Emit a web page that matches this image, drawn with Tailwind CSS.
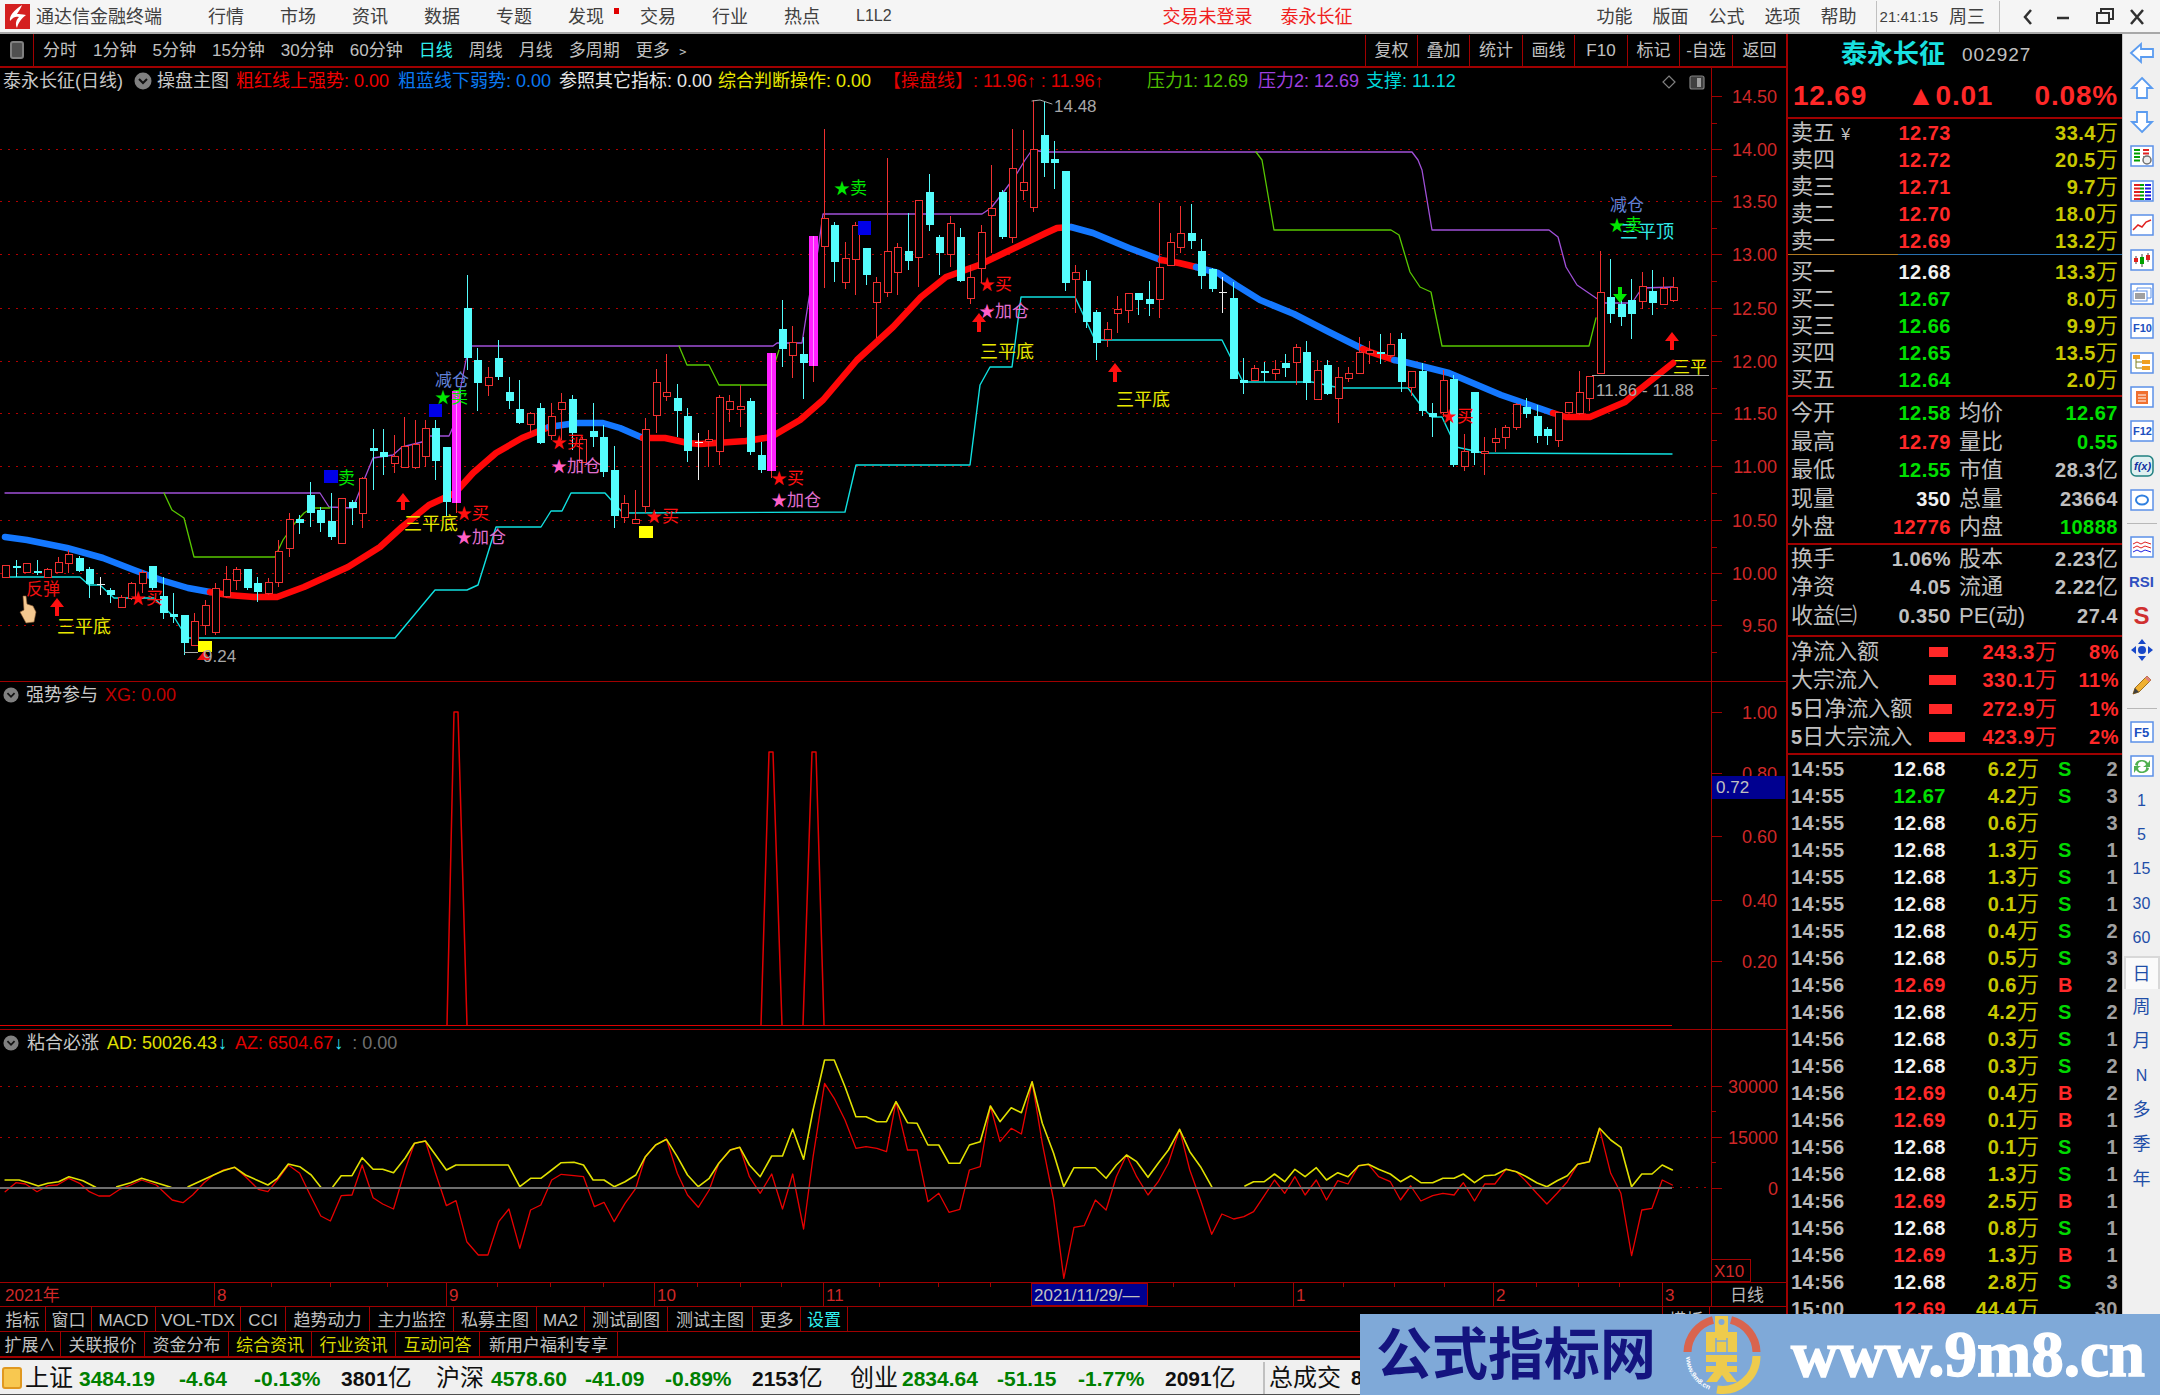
<!DOCTYPE html>
<html lang="zh-CN">
<head>
<meta charset="UTF-8">
<title>通达信金融终端</title>
<script src="https://cdn.jsdelivr.net/npm/@tailwindcss/browser@4"></script>
</head>
<body class="bg-black">
<div class="relative w-[2160px] h-[1395px] overflow-hidden bg-black font-['Liberation_Sans','Noto_Sans_CJK_SC',sans-serif]">

  <!-- title bar -->
  <div class="flex items-center h-[34px] pt-[1px] bg-[#f5f5f5] border-b-2 border-[#a8a8a8] text-[#404040] text-[18px] leading-none">
    <svg class="ml-[5px] w-[25px] h-[25px]" viewBox="0 0 25 25"><rect width="25" height="25" fill="#d42020"/><path d="M17 1 C9 6 4 12 5 17 C8 13 11 12 14 13 C11 16 10 20 12 24 C13 19 17 14 21 11 C17 10 14 10 12 10 C14 7 16 4 17 1Z" fill="#fff"/></svg>
    <span class="ml-[6px] w-[126px]">通达信金融终端</span>
    <div class="flex gap-[36px] ml-[46px]">
      <span>行情</span><span>市场</span><span>资讯</span><span>数据</span><span>专题</span>
      <span class="relative">发现<i class="absolute left-[46px] top-0 w-[5px] h-[6px] bg-[#e00000]"></i></span>
      <span>交易</span><span>行业</span><span>热点</span><span class="text-[16px]">L1L2</span>
    </div>
    <span class="ml-[271px] text-[#f02020] w-[95px]">交易未登录</span>
    <span class="ml-[23px] text-[#f02020] w-[76px]">泰永长征</span>
    <div class="flex gap-[20px] ml-[240px]"><span>功能</span><span>版面</span><span>公式</span><span>选项</span><span>帮助</span></div>
    <div class="flex items-center h-full ml-[19px] pl-[3px] border-x border-[#c0c0c0] w-[124px] text-[15px]">21:41:15<span class="ml-[11px] text-[18px]">周三</span></div>
    <svg class="ml-[19px] w-[130px] h-[24px]" viewBox="0 0 130 24" fill="none" stroke="#303030" stroke-width="2.5"><path d="M12 5 L6 12 L12 19"/><path d="M38 13 H50"/><path d="M78 8 H90 V18 H78Z M82 8 V4 H94 V14 H90" stroke-width="2"/><path d="M112 5 L124 19 M124 5 L112 19"/></svg>
  </div>

  <div class="flex h-[1326px]">
    <!-- left column -->
    <div class="w-[1788px] border-r-2 border-[#a00000]">
      <!-- period toolbar -->
      <div class="flex items-center h-[34px] border-b-2 border-[#a00000] text-[#c0c0c0] text-[17px] leading-none">
        <div class="flex items-center justify-center w-[34px] h-full border-r border-[#a00000]"><div class="w-[14px] h-[18px] rounded-[3px] border-2 border-[#808080] bg-[#505050]"></div></div>
        <div class="flex gap-[16px] ml-[9px] pt-[1px] items-center">
          <span>分时</span><span>1分钟</span><span>5分钟</span><span>15分钟</span><span>30分钟</span><span>60分钟</span><span class="text-[#30f0f0]">日线</span><span>周线</span><span>月线</span><span>多周期</span><span>更多 ﹥</span>
        </div>
        <div class="flex h-full ml-auto pt-[1px]">
          <span class="flex items-center justify-center w-[52px] border-l border-[#a00000]">复权</span>
          <span class="flex items-center justify-center w-[52px] border-l border-[#a00000]">叠加</span>
          <span class="flex items-center justify-center w-[53px] border-l border-[#a00000]">统计</span>
          <span class="flex items-center justify-center w-[52px] border-l border-[#a00000]">画线</span>
          <span class="flex items-center justify-center w-[53px] border-l border-[#a00000]">F10</span>
          <span class="flex items-center justify-center w-[52px] border-l border-[#a00000]">标记</span>
          <span class="flex items-center justify-center w-[53px] border-l border-[#a00000]">-自选</span>
          <span class="flex items-center justify-center w-[54px] border-l border-[#a00000]">返回</span>
        </div>
      </div>

      <!-- price panel -->
      <div class="relative h-[614px]">
        <svg id="priceChart" class="block w-[1786px] h-[614px]" viewBox="0 68 1786 614"></svg>
        <div class="absolute left-[3px] top-0 flex items-center h-[26px] text-[18px] leading-none whitespace-nowrap text-[#c8c8c8]">
          <span class="w-[131px]">泰永长征(日线)</span>
          <span class="w-[23px]"><svg class="block w-[18px] h-[18px]" viewBox="0 0 18 18"><circle cx="9" cy="9" r="8.5" fill="#808080"/><path d="M5 7 L9 11 L13 7" fill="none" stroke="#111" stroke-width="2"/></svg></span>
          <span class="w-[79px]">操盘主图</span>
          <span class="w-[162px] text-[#f00000]">粗红线上强势: 0.00</span>
          <span class="w-[161px] text-[#0a78f0]">粗蓝线下弱势: 0.00</span>
          <span class="w-[159px] text-[#e8e8e8]">参照其它指标: 0.00</span>
          <span class="w-[165px] text-[#e8e800]">综合判断操作: 0.00</span>
          <span class="w-[264px] text-[#e00000]">【操盘线】: 11.96↑ : 11.96↑</span>
          <span class="w-[111px] text-[#50c000]">压力1: 12.69</span>
          <span class="w-[108px] text-[#a040e0]">压力2: 12.69</span>
          <span class="text-[#00d8d8]">支撑: 11.12</span>
        </div>
        <svg class="absolute left-[1660px] top-[5px] w-[46px] h-[18px]" viewBox="0 0 46 18" fill="none" stroke="#808080" stroke-width="1.2"><path d="M9 3 L15 9 L9 15 L3 9Z"/><rect x="30" y="3" width="14" height="13" rx="2" fill="#404040"/><rect x="37" y="5" width="4" height="9" fill="#a0a0a0" stroke="none"/></svg>
      </div>

      <!-- strength panel -->
      <div class="relative h-[348px]">
        <svg id="strengthChart" class="block w-[1786px] h-[348px]" viewBox="0 682 1786 348"></svg>
        <div class="absolute left-[3px] top-0 flex items-center h-[26px] text-[18px] leading-none whitespace-nowrap text-[#c8c8c8]">
          <svg class="w-[16px] h-[16px]" viewBox="0 0 18 18"><circle cx="9" cy="9" r="8.5" fill="#808080"/><path d="M5 7 L9 11 L13 7" fill="none" stroke="#111" stroke-width="2"/></svg>
          <span class="ml-[7px]">强势参与</span>
          <span class="ml-[7px] text-[#c00000]">XG: 0.00</span>
        </div>
      </div>

      <!-- AD/AZ panel -->
      <div class="relative h-[252px]">
        <svg id="adChart" class="block w-[1786px] h-[252px]" viewBox="0 1030 1786 252"></svg>
        <div class="absolute left-[3px] top-0 flex items-center h-[26px] text-[18px] leading-none whitespace-nowrap text-[#c8c8c8]">
          <svg class="w-[16px] h-[16px]" viewBox="0 0 18 18"><circle cx="9" cy="9" r="8.5" fill="#808080"/><path d="M5 7 L9 11 L13 7" fill="none" stroke="#111" stroke-width="2"/></svg>
          <span class="ml-[8px]">粘合必涨</span>
          <span class="ml-[8px] text-[#e0e000]">AD: 50026.43</span><span class="text-[#30e8f8] ml-[1px]">↓</span>
          <span class="ml-[8px] text-[#e00000]">AZ: 6504.67</span><span class="text-[#30e8f8] ml-[1px]">↓</span>
          <span class="ml-[9px] text-[#707070]">: 0.00</span>
        </div>
      </div>

      <!-- date axis -->
      <svg id="dateAxis" class="block w-[1786px] h-[24px]" viewBox="0 1282 1786 24"></svg>

      <!-- indicator tabs -->
      <div class="flex h-[26px] border-y-1 border-[#a00000] text-[#c0c0c0] text-[17px] leading-none [&>span]:pt-[3px]">
        <span class="flex items-center justify-center w-[46px] border-r border-[#a00000]">指标</span>
        <span class="flex items-center justify-center w-[46px] border-r border-[#a00000]">窗口</span>
        <span class="flex items-center justify-center w-[64px] border-r border-[#a00000]">MACD</span>
        <span class="flex items-center justify-center w-[85px] border-r border-[#a00000]">VOL-TDX</span>
        <span class="flex items-center justify-center w-[45px] border-r border-[#a00000]">CCI</span>
        <span class="flex items-center justify-center w-[84px] border-r border-[#a00000]">趋势动力</span>
        <span class="flex items-center justify-center w-[84px] border-r border-[#a00000]">主力监控</span>
        <span class="flex items-center justify-center w-[83px] border-r border-[#a00000]">私募主图</span>
        <span class="flex items-center justify-center w-[48px] border-r border-[#a00000]">MA2</span>
        <span class="flex items-center justify-center w-[83px] border-r border-[#a00000]">测试副图</span>
        <span class="flex items-center justify-center w-[85px] border-r border-[#a00000]">测试主图</span>
        <span class="flex items-center justify-center w-[48px] border-r border-[#a00000]">更多</span>
        <span class="flex items-center justify-center w-[47px] border-r border-[#a00000] text-[#30f0f0]">设置</span>
        <span class="flex items-center justify-center w-[48px] ml-[814px] border-x border-[#a00000]">模板</span>
      </div>
      <div class="flex h-[26px] border-b-2 border-[#a00000] text-[#c0c0c0] text-[17px] leading-none [&>span]:pt-[3px]">
        <span class="flex items-center justify-center w-[61px] border-r border-[#a00000]">扩展∧</span>
        <span class="flex items-center justify-center w-[84px] border-r border-[#a00000]">关联报价</span>
        <span class="flex items-center justify-center w-[84px] border-r border-[#a00000]">资金分布</span>
        <span class="flex items-center justify-center w-[83px] border-r border-[#a00000] text-[#d8d800]">综合资讯</span>
        <span class="flex items-center justify-center w-[84px] border-r border-[#a00000] text-[#d8d800]">行业资讯</span>
        <span class="flex items-center justify-center w-[84px] border-r border-[#a00000] text-[#d8d800]">互动问答</span>
        <span class="flex items-center justify-center w-[138px] border-r border-[#a00000]">新用户福利专享</span>
      </div>
    </div>

    <!-- quote panel -->
    <div class="w-[334px] overflow-hidden">
      <div class="flex items-center h-[34px] pt-[6px] pl-[53px] text-[#18e0e0]">
        <span class="text-[26px] font-bold leading-none">泰永长征</span>
        <span class="ml-[17px] text-[19px] tracking-[1px] text-[#c0c0c0] leading-none">002927</span>
      </div>
      <div class="relative flex items-center h-[51px] pt-[6px] pl-[5px] pr-[4px] border-b-2 border-[#a00000] text-[#ff2828] text-[28px] font-bold leading-none tracking-[0.8px]">
        <span class="w-[114px]">12.69</span>
        <span class="w-[123px]">▲0.01</span>
        <span class="ml-auto">0.08%</span>
      </div>
      <div id="askRows"></div>
      <div class="h-[1px] bg-[linear-gradient(90deg,#b07820_33%,#2870b0_33%)]"></div>
      <div id="bidRows" class="pt-[3px] pb-[2px] border-b-2 border-[#a00000]"></div>
      <div id="statRows" class="pt-[2px] pb-[1px] border-b-2 border-[#a00000]"></div>
      <div id="infoRows" class="pb-[5px] border-b-2 border-[#a00000]"></div>
      <div id="flowRows" class="pt-[1px] pb-[2px] border-b-2 border-[#a00000]"></div>
      <div id="tickRows"></div>
    </div>

    <!-- tool strip -->
    <div id="toolStrip" class="flex flex-col w-[38px] pt-[2px] bg-[#f0f0f0] border-l border-[#c8c8c8] text-[#1f4ea8] leading-none"></div>
  </div>

  <!-- index strip -->
  <div class="flex items-center h-[35px] pt-[2px] bg-[#f0f0f0] border-b border-[#505050] text-[21px] leading-none whitespace-nowrap text-[#101010]">
    <div class="w-[25px] pl-[2px]"><div class="w-[20px] h-[22px] rounded-[3px] border-2 border-[#e09820] bg-[#f8c850]"></div></div>
    <span class="w-[54px] text-[24px]">上证</span>
    <span class="w-[100px] font-bold text-[#008000]">3484.19</span>
    <span class="w-[75px] font-bold text-[#008000]">-4.64</span>
    <span class="w-[87px] font-bold text-[#008000]">-0.13%</span>
    <span class="w-[95px] font-bold">3801<span class="text-[24px] font-normal">亿</span></span>
    <span class="w-[55px] text-[24px]">沪深</span>
    <span class="w-[94px] font-bold text-[#008000]">4578.60</span>
    <span class="w-[80px] font-bold text-[#008000]">-41.09</span>
    <span class="w-[87px] font-bold text-[#008000]">-0.89%</span>
    <span class="w-[98px] font-bold">2153<span class="text-[24px] font-normal">亿</span></span>
    <span class="w-[52px] text-[24px]">创业</span>
    <span class="w-[95px] font-bold text-[#008000]">2834.64</span>
    <span class="w-[81px] font-bold text-[#008000]">-51.15</span>
    <span class="w-[87px] font-bold text-[#008000]">-1.77%</span>
    <span class="w-[98px] font-bold">2091<span class="text-[24px] font-normal">亿</span></span>
    <span class="flex items-center h-full pl-[4px] border-l-2 border-[#c0c0c0] text-[24px]">总成交<b class="ml-[10px] text-[20px]">8</b></span>
  </div>

  <!-- site watermark -->
  <div class="absolute left-[1360px] top-[1314px] flex items-center w-[800px] h-[81px] bg-[#7fa9d8] leading-none whitespace-nowrap">
    <span class="ml-[16px] w-[280px] text-[56px] font-bold text-[#14147f]">公式指标网</span>
    <svg class="ml-[27px] w-[78px] h-[81px]" viewBox="1682 1314 78 81">
      <g fill="none" stroke-width="8">
        <path d="M1712 1320 A34 34 0 0 0 1686.500 1352" stroke="#d9644e"/>
        <path d="M1730 1320 A34 34 0 0 1 1755.500 1352" stroke="#d9644e"/>
        <path d="M1755.500 1356 A34 34 0 0 1 1716 1389.500" stroke="#eecb4c"/>
      </g>
      <path d="M1714 1316 H1727 V1332 H1736 V1352 H1705 V1332 H1714Z" fill="#eecb4c"/>
      <path d="M1705 1355 H1736 V1362 H1726 V1366 H1736 V1372 H1728 L1736 1382 H1726 L1721 1375 L1716 1382 H1705 L1713 1372 H1705 V1366 H1715 V1362 H1705Z" fill="#eecb4c"/>
      <circle cx="1720.500" cy="1322" r="3" fill="#7fa9d8"/>
      <path d="M1715 1341 H1726 M1715 1338 V1352 M1726 1338 V1352" stroke="#7fa9d8" stroke-width="1.500" fill="none"/>
      <path id="logoArc" d="M1685 1357 A36 36 0 0 0 1712 1391" fill="none"/>
      <text font-size="7" font-weight="700" fill="#fff"><textPath href="#logoArc">www.9m8.cn</textPath></text>
    </svg>
    <span class="ml-[30px] text-[65px] font-bold text-white font-['Liberation_Serif',serif] [-webkit-text-stroke:1.5px_#fff]">www.9m8.cn</span>
  </div>
</div>

<script>
// --- HELPERS ---
const AXIS = '#a00000', DOT = '#b00000', LABEL = '#d02828';
const RED = '#f03030', CYAN = '#54fcfc', PINK = '#ff20ff', GRAY = '#a8a8a8';
const poly = (p, c, w = 1) => `<polyline points="${p.map(a => a.join(',')).join(' ')}" fill="none" stroke="${c}" stroke-width="${w}" stroke-linejoin="round" stroke-linecap="round"/>`;
const line = (x1, y1, x2, y2, c, extra = '') => `<line x1="${x1}" y1="${y1}" x2="${x2}" y2="${y2}" stroke="${c}" shape-rendering="crispEdges" ${extra}/>`;
const txt = (x, y, s, c, size = 18, anchor = 'start') => `<text x="${x}" y="${y}" fill="${c}" font-size="${size}" text-anchor="${anchor}" dominant-baseline="central">${s}</text>`;
const dotted = (y, x2 = 1711) => line(0, y, x2, y, DOT, 'stroke-dasharray="2 6"');
const upArrow = (x, y1, y2, c = '#ff1010') => `<path d="M${x} ${y1} L${x + 7} ${y1 + 9} H${x + 2} V${y2} H${x - 2} V${y1 + 9} H${x - 7}Z" fill="${c}"/>`;
const square = (x1, y1, x2, y2, c) => `<rect x="${x1}" y="${y1}" width="${x2 - x1}" height="${y2 - y1}" fill="${c}"/>`;
const starTag = (x, y, s, c, sc = c) => txt(x - 8, y, '★', sc, 16) + txt(x + 8, y, s, c, 17);

// --- PRICE PANEL DATA ---
// [kind, bodyTop, bodyBottom, wickTop, wickBottom], index = bar number; kinds r/c/w/p
const bars = [
['r',565,577,565,577],['c',566,568,560,577],['r',563,572,563,572],['c',571,573,560,575],['r',569,577,568,577],['r',562,572,557,573],['r',554,563,550,573],['c',558,571,556,572],['c',569,584,567,598],['w',584,584,577,595],
['c',590,595,588,603],['r',597,607,595,607],['r',583,598,582,600],['r',572,583,570,593],['c',566,588,566,590],['c',596,613,577,619],['c',614,617,593,623],['c',615,643,615,655],['r',621,645,613,645],['r',605,625,600,635],
['r',588,632,583,635],['r',579,596,566,598],['r',569,580,567,590],['c',569,588,569,590],['c',583,592,577,602],['r',582,593,578,595],['r',551,582,540,587],['r',519,548,513,557],['c',519,523,515,534],['c',495,513,482,527],
['c',510,523,507,532],['c',521,537,493,540],['r',498,543,498,543],['c',502,508,500,525],['r',478,513,477,528],['c',448,451,429,490],['c',452,457,429,475],['r',456,463,435,473],['r',446,467,417,468],['r',444,467,420,469],
['r',428,456,420,467],['c',428,461,420,480],['c',447,502,447,517],['p',391,503,391,513],['c',308,358,275,370],['c',360,383,348,411],['r',377,385,367,396],['c',358,377,340,380],['c',392,401,377,409],['c',409,423,380,424],
['r',413,424,412,433],['c',408,443,403,444],['r',416,435,403,440],['r',402,409,393,440],['c',399,433,395,450],['r',439,462,437,463],['c',431,437,403,447],['c',437,472,425,477],['c',470,516,446,528],['r',503,517,495,523],
['r',519,523,490,523],['r',429,506,418,513],['r',382,415,369,433],['r',392,396,354,401],['c',398,411,384,437],['c',416,451,408,462],['w',442,442,433,480],['r',439,441,430,467],['r',397,451,395,465],['r',401,409,395,422],
['r',406,409,385,427],['c',401,452,398,455],['c',455,470,442,473],['p',353,471,353,478],['c',329,349,300,367],['r',342,355,326,378],['c',354,363,337,399],['p',236,366,236,382],['r',218,246,129,288],['c',225,262,222,282],
['r',258,282,242,289],['r',225,259,222,295],['c',248,275,248,285],['r',282,302,277,338],['r',251,292,158,297],['r',247,272,243,295],['c',251,261,213,270],['r',200,257,200,287],['c',192,225,174,231],['c',237,253,235,275],
['r',223,254,216,267],['c',237,281,228,282],['r',277,298,265,304],['r',232,268,225,283],['r',208,215,165,253],['c',192,237,190,239],['r',168,237,129,243],['r',182,190,130,200],['r',149,207,100,212],['c',135,163,102,177],
['c',159,163,141,189],['c',171,283,171,291],['r',272,279,265,313],['c',281,322,270,328],['c',312,343,310,360],['r',329,339,322,347],['r',309,313,296,333],['r',293,310,293,323],['c',293,300,293,315],['c',299,304,281,316],
['r',267,299,203,318],['r',242,265,233,265],['r',233,247,206,253],['c',233,241,204,249],['c',251,276,239,289],['c',269,289,268,292],['w',292,292,277,313],['c',298,379,282,379],['c',380,383,358,394],['r',368,380,365,380],
['c',371,373,362,382],['r',369,373,360,380],['c',363,368,354,377],['r',347,362,344,385],['c',352,383,341,400],['r',370,399,360,400],['c',365,394,360,395],['r',377,398,367,423],['r',373,378,367,382],['r',352,373,337,373],
['r',350,353,341,364],['c',352,354,334,364],['r',344,355,333,358],['c',339,382,333,392],['r',371,387,371,396],['c',371,411,363,416],['c',413,417,403,437],['r',380,412,370,417],['c',379,465,375,467],['r',451,466,434,471],
['c',392,453,392,465],['r',451,453,437,475],['r',438,442,428,452],['r',427,437,425,449],['r',404,427,403,430],['c',407,414,398,418],['c',416,436,405,443],['c',429,436,427,445],['r',412,440,412,447],['r',402,412,402,412],
['r',392,413,371,415],['r',376,398,376,411],['r',292,373,251,373],['c',297,314,259,323],['c',304,317,288,326],['c',300,314,279,339],['r',286,301,272,309],['c',291,303,270,315],['r',288,304,277,304],['r',287,300,277,302]];

const purple = [[5,493],[320,493],[329,507],[353,508],[364,480],[373,458],[393,455],[402,447],[422,442],[429,436],[449,436],[453,427],[466,360],[471,346],[773,346],[777,343],[802,343],[809,298],[818,250],[823,214],[982,214],[991,208],[1005,190],[1016,175],[1025,160],[1032,150],[1046,152],[1412,152],[1418,160],[1422,170],[1432,230],[1549,230],[1558,237],[1566,267],[1577,285],[1596,298],[1604,303],[1632,303],[1642,288],[1673,287]];
const greenLines = [
[[164,493],[172,510],[184,518],[194,557],[275,557],[283,540],[295,523],[304,513],[312,508],[330,508]],
[[679,346],[687,365],[709,365],[719,385],[768,385],[779,350]],
[[1256,152],[1262,160],[1274,230],[1391,230],[1399,235],[1410,272],[1420,287],[1431,292],[1442,346],[1589,346],[1596,318]]];
const support = [[5,577],[80,577],[89,585],[100,585],[114,598],[154,598],[174,617],[187,638],[395,638],[435,590],[467,590],[478,585],[496,527],[541,527],[551,511],[562,511],[571,493],[605,493],[623,513],[845,512],[856,465],[970,465],[980,385],[990,367],[1012,367],[1021,297],[1075,297],[1095,340],[1222,340],[1243,382],[1312,382],[1340,388],[1408,388],[1422,407],[1432,417],[1442,417],[1456,447],[1484,453],[1672,454]];
const trend = [
['#1478ff',[[5,537],[27,540],[67,548],[103,558],[134,570],[161,580],[188,588],[210,592]]],
['#ff0808',[[210,592],[228,595],[254,597],[277,597],[304,587],[348,567],[380,547],[402,527],[429,505],[455,493],[473,473],[496,453],[522,438],[549,427]]],
['#1478ff',[[549,427],[576,423],[603,423],[620,428],[643,438]]],
['#ff0808',[[643,438],[665,438],[688,443],[700,444],[746,441],[771,437],[800,420],[823,400],[857,360],[893,327],[921,297],[946,277],[979,265],[1004,253],[1046,233],[1057,228],[1071,227]]],
['#1478ff',[[1071,227],[1093,233],[1129,248],[1161,260]]],
['#ff0808',[[1161,260],[1179,263],[1196,267]]],
['#1478ff',[[1196,267],[1218,273],[1236,285],[1260,300],[1294,314],[1329,332],[1363,349]]],
['#ff0808',[[1363,349],[1370,352],[1394,360]]],
['#1478ff',[[1394,360],[1405,362],[1449,373],[1501,395],[1553,413]]],
['#ff0808',[[1553,413],[1566,417],[1590,417],[1625,402],[1639,390],[1673,363]]]];

// --- PRICE PANEL ---
function drawPrice() {
    const prices = [['14.50',96],['14.00',149],['13.50',201],['13.00',254],['12.50',308],['12.00',361],['11.50',413],['11.00',466],['10.50',520],['10.00',573],['9.50',625]];
    let s = '';
    prices.forEach(([p, y]) => { if (y > 100) s += dotted(y + .5); });
    prices.forEach(([p, y], i) => {
        s += line(1711, y + .5, 1722, y + .5, AXIS) + line(1711, y + 27, 1717, y + 27, AXIS) + txt(1777, y + 1, p, LABEL, 18, 'end');
    });
    s += line(1711.5, 68, 1711.5, 682, AXIS) + line(0, 681.5, 1786, 681.5, AXIS);
    s += poly(purple, '#a050d8', 1.3) + greenLines.map(g => poly(g, '#58c800', 1.3)).join('') + poly(support, '#10e0e0', 1.4);
    trend.forEach(([c, p]) => { s += poly(p, c, 6.5); });
    bars.forEach((b, i) => {
        const x = Math.round(5.4 + i * 10.49) + .5;
        const [k, top, bot, hi, lo] = b;
        if (k === 'p') {
            s += line(x, hi, x, lo, RED) + `<rect x="${x - 4.5}" y="${top}" width="9" height="${bot - top}" fill="${PINK}"/>` + line(x, top, x, bot, '#ff90ff');
        } else if (k === 'w') {
            s += line(x, hi, x, lo, '#f0f0f0') + line(x - 4, top + .5, x + 4, top + .5, '#f0f0f0');
        } else if (k === 'c') {
            s += line(x, hi, x, lo, CYAN) + `<rect x="${x - 4}" y="${top}" width="8" height="${Math.max(bot - top, 2)}" fill="${CYAN}" shape-rendering="crispEdges"/>`;
        } else {
            s += line(x, hi, x, lo, RED) + `<rect x="${x - 3.5}" y="${top + .5}" width="7" height="${Math.max(bot - top, 2)}" fill="#000" stroke="${RED}" shape-rendering="crispEdges"/>`;
        }
    });
    const Y = '#e8e800', G = '#00e800', R = '#ff1010', P = '#e070d0', PS = '#ff60c8', B = '#6080d8';
    s += txt(26, 589, '反弹', '#f01010', 17) + upArrow(57, 598, 616) + txt(57, 627, '三平底', Y, 18);
    s += `<path d="M23 596 L26 596 L27 604 L33 606 L36 612 L34 622 L26 623 L20 612 L24 610Z" fill="#f4c890" stroke="#8a5a30" stroke-width=".6"/>`;
    s += starTag(138, 598, '买', R);
    s += square(198, 641, 212, 652, '#ffff00') + `<path d="M204 651 L211 660 H197Z" fill="#f01010"/>` + line(184, 652, 198, 652, GRAY) + txt(203, 656, '9.24', GRAY, 17);
    s += txt(338, 478, '卖', G, 17) + square(324, 470, 338, 483, '#0000e8');
    s += upArrow(403, 493, 510) + txt(404, 524, '三平底', Y, 18);
    s += txt(435, 380, '减仓', B, 17) + square(429, 404, 442, 417, '#0000e8') + starTag(443, 397, '卖', G);
    s += starTag(464, 513, '买', R) + starTag(464, 537, '加仓', P, PS);
    s += starTag(559, 442, '买', R) + starTag(559, 466, '加仓', P, PS);
    s += starTag(654, 516, '买', R) + square(639, 526, 653, 538, '#ffff00');
    s += starTag(779, 478, '买', R) + starTag(779, 500, '加仓', P, PS);
    s += starTag(842, 188, '卖', G) + square(858, 221, 871, 235, '#0000e8');
    s += starTag(987, 284, '买', R) + starTag(987, 311, '加仓', P, PS) + upArrow(979, 313, 332) + txt(980, 352, '三平底', Y, 18);
    s += upArrow(1115, 363, 382) + txt(1116, 400, '三平底', Y, 18);
    s += poly([[1032,101],[1040,100],[1052,104]], GRAY) + txt(1054, 106, '14.48', GRAY, 17);
    s += starTag(1449, 416, '买', R);
    s += txt(1610, 205, '减仓', B, 17) + txt(1620, 232, '三平顶', '#30e8e8', 18) + starTag(1617, 225, '卖', G);
    s += `<path d="M1620 303 L1613 294 H1618 V287 H1622 V294 H1627Z" fill="#00e800"/>` + upArrow(1672, 332, 350);
    s += txt(1673, 367, '三平', Y, 17) + line(1592, 375.5, 1709, 375.5, GRAY) + txt(1596, 390, '11.86 - 11.88', GRAY, 17);
    document.getElementById('priceChart').innerHTML = s;
}

// --- STRENGTH PANEL ---
function drawStrength() {
    let s = line(1711.5, 682, 1711.5, 1030, AXIS) + line(0, 1029.5, 1786, 1029.5, AXIS) + line(0, 1025.5, 1672, 1025.5, '#e00000');
    [['1.00',712],['0.80',773],['0.60',836],['0.40',900],['0.20',961]].forEach(([t, y]) => {
        s += line(1711, y + .5, 1722, y + .5, AXIS) + txt(1777, y + 1, t, LABEL, 18, 'end');
    });
    s += `<rect x="1712" y="776" width="73" height="23" fill="#000090"/>` + txt(1716, 787, '0.72', '#c0c0c0', 17);
    [[447,456,467,712],[761,771,782,752],[803,814,824,752]].forEach(([a, m, b, y]) => {
        s += poly([[a,1025],[m - 2,y],[m + 2,y],[b,1025]], '#e00000', 1.5);
    });
    document.getElementById('strengthChart').innerHTML = s;
}

// --- AD/AZ PANEL ---
const z9 = a => a.map(([x, y]) => [+(x / 1.568).toFixed(1), +(1030 + y / 3).toFixed(1)]);
const z10 = a => a.map(([x, y]) => [+(1000 + x / 1.96).toFixed(1), +(1030 + y / 3).toFixed(1)]);
const adSegs = [
z9([[8,450],[30,450],[45,458],[60,468],[75,460],[92,455],[108,440],[130,452],[150,472]]),
z9([[183,470],[205,458],[222,445],[245,458],[268,472]]),
z9([[295,470],[312,455],[335,435],[350,422],[368,412],[385,435],[405,452],[420,465],[435,445],[452,402],[470,410],[488,435],[503,472]]),
z9([[522,470],[535,437],[552,437],[568,383],[585,418],[600,418],[617,428],[635,385],[650,340],[667,333],[683,375],[700,420],[715,405],[797,405],[815,470],[832,445],[848,445],[865,420],[880,398],[900,397],[915,405],[930,450],[947,450],[963,470],[980,455],[997,435],[1012,380],[1028,345],[1045,328],[1062,380],[1078,435],[1095,470],[1112,445],[1127,400],[1145,360],[1160,352],[1175,405],[1192,440],[1210,378],[1227,378],[1243,297],[1260,388],[1275,240],[1293,90],[1308,90],[1325,170],[1342,260],[1358,260],[1375,275],[1390,275],[1405,215],[1423,278],[1438,280],[1455,345],[1472,345],[1488,400],[1505,400],[1520,345],[1537,335],[1553,228],[1568,275]]).concat(
z10([[22,233],[42,248],[63,155],[83,280],[105,370],[125,470],[145,413],[187,413],[208,445],[228,405],[248,375],[268,395],[290,442],[310,400],[330,360],[352,298],[372,365],[393,410],[415,470]])),
z10([[480,468],[497,455],[518,455],[538,432],[558,455],[578,418],[598,440],[620,413],[640,450],[662,428],[682,440],[703,407],[722,403],[742,418],[765,432],[785,455],[805,437],[825,458],[848,458],[868,445],[890,445],[908,432],[930,458],[950,437],[970,435],[992,418],[1012,425],[1032,440],[1052,458],[1072,470],[1092,452],[1112,437],[1132,403],[1155,395],[1175,295],[1197,330],[1217,352],[1238,470],[1258,432],[1278,432],[1298,405],[1318,420]])];
const azLine = z9([[8,485],[25,458],[40,462],[58,485],[75,467],[90,465],[108,445],[125,460],[140,485],[155,498],[172,498],[188,478],[205,465],[222,450],[245,465],[270,510],[287,518],[302,495],[320,458],[335,435],[350,420],[368,412],[385,440],[405,478],[420,485],[435,450],[452,405],[470,430],[485,490],[503,558],[518,573],[535,497],[552,495],[568,405],[585,503],[600,522],[617,537],[635,420],[650,340],[667,333],[683,430],[700,527],[715,512],[732,635],[750,675],[765,675],[782,575],[798,537],[815,655],[832,540],[848,525],[865,450],[880,433],[900,437],[915,440],[932,530],[947,517],[963,575],[980,520],[997,475],[1012,380],[1028,345],[1045,328],[1062,430],[1078,495],[1095,532],[1112,480],[1127,400],[1145,360],[1160,352],[1175,440],[1192,490],[1210,432],[1227,537],[1243,432],[1260,597],[1275,380],[1293,160],[1308,205],[1325,270],[1342,355],[1358,350],[1375,355],[1390,365],[1405,215],[1423,360],[1438,360],[1455,515],[1472,490],[1488,547],[1505,538],[1520,420],[1537,410],[1553,228],[1568,335]]).concat(
z10([[22,295],[42,312],[63,155],[83,340],[105,510],[125,745],[145,592],[165,587],[187,510],[208,540],[228,440],[248,375],[268,440],[290,495],[310,455],[330,400],[352,298],[372,420],[393,510],[415,613],[435,552],[458,567],[478,560],[497,545],[518,497],[538,450],[558,490],[578,440],[598,495],[620,450],[640,510],[662,452],[682,462],[703,407],[722,403],[742,440],[765,455],[785,510],[805,468],[825,513],[848,497],[868,490],[890,495],[908,458],[930,513],[950,462],[970,462],[992,418],[1012,425],[1032,455],[1052,490],[1072,522],[1092,490],[1112,455],[1132,403],[1155,395],[1175,295],[1197,430],[1217,490],[1238,677],[1258,540],[1278,535],[1298,450],[1318,465]]));

function drawAd() {
    let s = line(1711.5, 1030, 1711.5, 1282, AXIS);
    [1086.5, 1137.5].forEach(y => { s += dotted(y); });
    s += line(1672, 1187.5, 1711, 1187.5, DOT, 'stroke-dasharray="2 6"');
    [['30000',1086],['15000',1137],['0',1188]].forEach(([t, y]) => { s += line(1711, y + .5, 1722, y + .5, AXIS) + txt(1778, y + 1, t, LABEL, 18, 'end'); });
    s += line(1711, 1111.5, 1716, 1111.5, AXIS) + line(1711, 1162.5, 1716, 1162.5, AXIS);
    s += poly(azLine, '#e80000', 1.3) + adSegs.map(a => poly(a, '#e0e000', 1.6)).join('') + line(0, 1187.5, 1672, 1187.5, '#6e6e6e', 'stroke-width="2"');
    s += `<rect x="1711.5" y="1259.5" width="39" height="22" fill="none" stroke="${AXIS}"/>` + txt(1714, 1271, 'X10', LABEL, 17);
    document.getElementById('adChart').innerHTML = s;
}

// --- DATE AXIS ---
function drawDates() {
    let s = line(0, 1282.5, 1786, 1282.5, AXIS) + line(1711.5, 1282, 1711.5, 1306, AXIS);
    [271,330,387,497,550,603,697,740,781,879,938,990,1173,1234,1343,1394,1444,1536,1578,1619].forEach(x => { s += line(x + .5, 1282, x + .5, 1287, AXIS); });
    [[214,'8'],[446,'9'],[654,'10'],[823,'11'],[1293,'1'],[1493,'2'],[1662,'3']].forEach(([x, t]) => { s += line(x + .5, 1282, x + .5, 1306, AXIS) + txt(x + 3, 1295, t, LABEL, 17); });
    s += txt(5, 1295, '2021年', LABEL, 17);
    s += `<rect x="1031.5" y="1283.5" width="116" height="22" fill="#000090" stroke="${AXIS}"/>` + txt(1034, 1295, '2021/11/29/—', '#c0c0c0', 17);
    s += txt(1730, 1295, '日线', '#b8b8b8', 17);
    document.getElementById('dateAxis').innerHTML = s;
}

// --- QUOTE PANEL ---
const PRICE = { r: 'text-[#ff2828]', g: 'text-[#00e000]', w: 'text-[#f0f0f0]', y: 'text-[#c8c800]', s: 'text-[#c0c0c0]' };

function bookRow(label, price, tone, vol) {
    return `<div class="flex items-center h-[27px] pl-[3px] pr-[4px] leading-none">
        <span class="w-[107px] text-[22px] text-[#c0c0c0] whitespace-nowrap">${label}</span>
        <span class="w-[53px] text-right text-[20px] font-bold tracking-[0.5px] ${PRICE[tone]}">${price}</span>
        <span class="flex-1 text-right text-[20px] font-bold tracking-[0.5px] text-[#c8c800]">${vol}<span class="text-[22px] font-normal tracking-normal">万</span></span>
    </div>`;
}
document.getElementById('askRows').innerHTML = [
    ['卖五 <span class="text-[16px]">¥</span>','12.73','r','33.4'],['卖四','12.72','r','20.5'],['卖三','12.71','r','9.7'],['卖二','12.70','r','18.0'],['卖一','12.69','r','13.2']
].map(r => bookRow(...r)).join('');
document.getElementById('bidRows').innerHTML = [
    ['买一','12.68','w','13.3'],['买二','12.67','g','8.0'],['买三','12.66','g','9.9'],['买四','12.65','g','13.5'],['买五','12.64','g','2.0']
].map(r => bookRow(...r)).join('');

function statRow(l1, v1, t1, l2, v2, t2, unit = '') {
    return `<div class="flex items-center h-[28.500px] pl-[3px] pr-[4px] leading-none">
        <span class="flex justify-between items-center w-[160px]">
            <span class="text-[22px] text-[#c0c0c0] whitespace-nowrap">${l1}</span>
            <span class="text-[20px] font-bold tracking-[0.5px] ${PRICE[t1]}">${v1}</span>
        </span>
        <span class="ml-[8px] text-[22px] text-[#c0c0c0] whitespace-nowrap">${l2}</span>
        <span class="ml-auto text-[20px] font-bold tracking-[0.5px] whitespace-nowrap ${PRICE[t2]}">${v2}${unit ? `<span class="text-[22px] font-normal tracking-normal">${unit}</span>` : ''}</span>
    </div>`;
}
document.getElementById('statRows').innerHTML = [
    ['今开','12.58','g','均价','12.67','g'],['最高','12.79','r','量比','0.55','g'],['最低','12.55','g','市值','28.3','s','亿'],['现量','350','w','总量','23664','s'],['外盘','12776','r','内盘','10888','g']
].map(r => statRow(...r)).join('');
document.getElementById('infoRows').innerHTML = [
    ['换手','1.06%','s','股本','2.23','s','亿'],['净资','4.05','s','流通','2.22','s','亿'],['收益㈢','0.350','s','PE(动)','27.4','s']
].map(r => statRow(...r)).join('');

document.getElementById('flowRows').innerHTML = [
    ['净流入额',19,'243.3','8%'],['大宗流入',27,'330.1','11%'],['<b class="text-[20px]">5</b>日净流入额',23,'272.9','1%'],['<b class="text-[20px]">5</b>日大宗流入',36,'423.9','2%']
].map(([label, w, amount, pct]) => `<div class="flex items-center h-[28.300px] pl-[3px] pr-[3px] leading-none">
        <span class="w-[138px] text-[22px] text-[#c0c0c0] whitespace-nowrap">${label}</span>
        <span class="w-[53px]"><i class="block h-[10px] bg-[#ff2828]" style="width:${w}px"></i></span>
        <span class="w-[75px] text-right text-[20px] font-bold tracking-[0.5px] text-[#ff2828] whitespace-nowrap">${amount}<span class="text-[22px] font-normal tracking-normal">万</span></span>
        <span class="flex-1 text-right text-[20px] font-bold tracking-[0.5px] text-[#ff2828]">${pct}</span>
    </div>`).join('');

const ticks = [
['14:55','12.68','w','6.2','S',2],['14:55','12.67','g','4.2','S',3],['14:55','12.68','w','0.6','',3],['14:55','12.68','w','1.3','S',1],['14:55','12.68','w','1.3','S',1],['14:55','12.68','w','0.1','S',1],['14:55','12.68','w','0.4','S',2],
['14:56','12.68','w','0.5','S',3],['14:56','12.69','r','0.6','B',2],['14:56','12.68','w','4.2','S',2],['14:56','12.68','w','0.3','S',1],['14:56','12.68','w','0.3','S',2],['14:56','12.69','r','0.4','B',2],['14:56','12.69','r','0.1','B',1],
['14:56','12.68','w','0.1','S',1],['14:56','12.68','w','1.3','S',1],['14:56','12.69','r','2.5','B',1],['14:56','12.68','w','0.8','S',1],['14:56','12.69','r','1.3','B',1],['14:56','12.68','w','2.8','S',3],['15:00','12.69','r','44.4','',30]];
document.getElementById('tickRows').innerHTML = ticks.map(([time, price, tone, vol, side, n]) => `<div class="flex items-center h-[27px] pl-[3px] pr-[4px] leading-none text-[20px] font-bold tracking-[0.5px]">
        <span class="w-[100px] text-[#b8b8b8]">${time}</span>
        <span class="w-[55px] text-right ${PRICE[tone]}">${price}</span>
        <span class="w-[93px] text-right text-[#c8c800] whitespace-nowrap">${vol}<span class="text-[22px] font-normal tracking-normal">万</span></span>
        <span class="ml-[19px] w-[14px] ${side === 'B' ? 'text-[#ff2828]' : 'text-[#00d800]'}">${side}</span>
        <span class="flex-1 text-right text-[#a0a0a0]">${n}</span>
    </div>`).join('');

// --- TOOL STRIP ---
const boxed = inner => `<svg class="w-[24px] h-[22px]" viewBox="0 0 24 22"><rect x="1" y="1" width="22" height="20" fill="#fff" stroke="#5b90e8" stroke-width="1.500"/>${inner}</svg>`;
const arrow = d => `<svg class="w-[26px] h-[24px]" viewBox="0 0 26 24"><path d="${d}" fill="#fff" stroke="#5b9cf0" stroke-width="1.800"/></svg>`;
const stripes = (x, colors, w = 6) => colors.map((c, i) => `<rect x="${x}" y="${4 + i * 3.500}" width="${w}" height="2" fill="${c}"/>`).join('');
const label = (s, cls) => `<span class="${cls}">${s}</span>`;
const BLUE = '#2050c0';
const strip = [
    arrow('M2 12 L12 3 V8 H24 V16 H12 V21Z'),
    arrow('M13 2 L23 12 H18 V22 H8 V12 H3Z'),
    arrow('M13 22 L23 12 H18 V2 H8 V12 H3Z'),
    boxed(stripes(4,['#00a000','#00a000','#00a000','#00a000']) + stripes(13,['#e02020','#e02020','#808080','#808080']) + `<circle cx="17" cy="15" r="4" fill="#eee" stroke="#707070" stroke-width="1.500"/>`),
    boxed(stripes(4,['#e02020','#e02020','#e02020','#e02020','#e02020']) + stripes(10,['#00a000','#00a000','#00a000','#00a000','#00a000'],4) + stripes(15,['#2020e0','#2020e0','#2020e0','#2020e0','#2020e0'])),
    boxed('<path d="M3 16 L8 11 L12 13 L16 8 L21 6" fill="none" stroke="#e02020" stroke-width="1.500"/>'),
    boxed('<path d="M6 7 V15 M12 5 V18 M18 4 V13" stroke="#444"/><rect x="4" y="9" width="4" height="4" fill="#e02020"/><rect x="10" y="8" width="4" height="7" fill="#00a000"/><rect x="16" y="6" width="4" height="5" fill="#e02020"/>'),
    boxed('<rect x="3" y="8" width="14" height="10" fill="#fff" stroke="#5b90e8"/><path d="M7 8 V5 H21 V15 H17" fill="none" stroke="#5b90e8"/><path d="M5 11 H15 M5 13 H15 M5 15 H15" stroke="#404040"/>'),
    boxed(`<text x="3" y="15" font-size="11" font-weight="700" fill="${BLUE}">F10</text>`),
    boxed('<path d="M6 5 V16 H12 M6 10 H12" fill="none" stroke="#808020"/><rect x="3" y="3" width="7" height="4" fill="#f0a020"/><rect x="12" y="8" width="8" height="4" fill="#f0a020"/><rect x="12" y="14" width="8" height="4" fill="#f0a020"/>'),
    boxed('<rect x="6" y="5" width="12" height="13" fill="#f07030"/><path d="M8 9 H16 M8 12 H16 M8 15 H16" stroke="#fff"/>'),
    boxed(`<text x="3" y="15" font-size="11" font-weight="700" fill="${BLUE}">F12</text>`),
    `<svg class="w-[24px] h-[22px]" viewBox="0 0 24 22"><rect x="1" y="1" width="22" height="20" rx="5" fill="#dff0f0" stroke="#208080" stroke-width="1.500"/><text x="4" y="15" font-size="11" font-style="italic" font-weight="700" fill="#1030a0">f(x)</text></svg>`,
    boxed('<ellipse cx="12" cy="11" rx="6" ry="4.500" fill="none" stroke="#3080e0" stroke-width="2"/>'),
    'sep',
    boxed('<path d="M3 8 L7 6 L11 8 L15 6 L21 8 M3 12 L7 10 L11 12 L15 10 L21 12" fill="none" stroke="#e02020"/><path d="M3 16 L7 14 L11 16 L15 14 L21 16" fill="none" stroke="#2020e0"/>'),
    label('RSI','text-[15px] font-bold text-[#3050c0]'),
    label('S','text-[24px] font-bold text-[#d03030]'),
    `<svg class="w-[24px] h-[24px]" viewBox="0 0 24 24" fill="#1848c8"><path d="M12 1 L16 6 H8Z M12 23 L8 18 H16Z M1 12 L6 8 V16Z M23 12 L18 16 V8Z"/><circle cx="12" cy="12" r="4"/></svg>`,
    `<svg class="w-[24px] h-[24px]" viewBox="0 0 24 24"><path d="M3 21 L5 15 L17 3 L21 7 L9 19Z" fill="#f0b030" stroke="#a07020"/><path d="M17 3 L21 7 L19 9 L15 5Z" fill="#e08080"/><path d="M3 21 L5 15 L9 19Z" fill="#404040"/></svg>`,
    'sep',
    boxed(`<text x="4" y="16" font-size="13" font-weight="700" fill="${BLUE}">F5</text>`),
    boxed('<path d="M5 10 A7 6 0 0 1 18 8 L20 5 V12 H13 L16 10 A4 4 0 0 0 8 11Z M19 13 A7 6 0 0 1 6 15 L4 18 V11 H11 L8 13 A4 4 0 0 0 16 12Z" fill="#50b050"/>'),
    label('1','text-[16px]'), label('5','text-[16px]'), label('15','text-[16px]'), label('30','text-[16px]'), label('60','text-[16px]'),
    label('日','flex items-center justify-center w-[36px] h-[33px] border-t-2 border-x-2 border-[#d8d8d8] bg-[#fafafa] text-[18px]'),
    label('周','text-[18px]'), label('月','text-[18px]'), label('N','text-[16px]'), label('多','text-[18px]'), label('季','text-[18px]'), label('年','text-[18px]')
];
document.getElementById('toolStrip').innerHTML = strip.map(it => it === 'sep'
    ? '<div class="h-[12.600px] flex items-center justify-center"><i class="block w-[30px] h-[1px] bg-[#b8b8b8]"></i></div>'
    : `<div class="flex items-center justify-center h-[34.400px] shrink-0">${it}</div>`).join('');

// --- INITIALIZATION ---
drawPrice();
drawStrength();
drawAd();
drawDates();
</script>
</body>
</html>
